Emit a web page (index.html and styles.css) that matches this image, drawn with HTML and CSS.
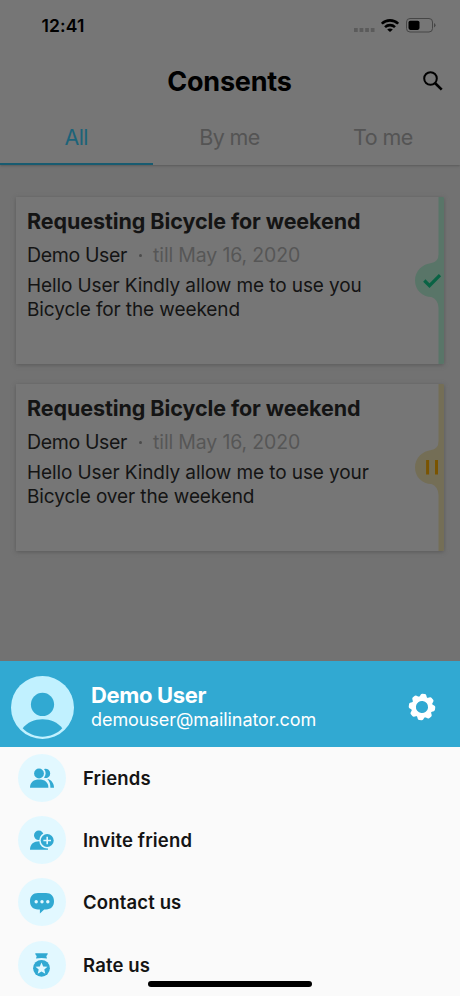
FILE: index.html
```
<!DOCTYPE html>
<html lang="en">
<head>
<meta charset="utf-8">
<title>Consents</title>
<link rel="stylesheet" href="styles.css">
</head>
<body>
<main class="phone">
  <header class="top">
    <div class="status">
      <span class="time">12:41</span>
      <span class="signals">
        <svg width="21" height="5" viewBox="0 0 21 5" fill="#5b5b5b"><path d="M0 0h3.700v4H0zM5.600 0h3.700v4H5.600zM11.200 0h3.700v4h-3.700zM16.800 0h3.700v4h-3.700z"/></svg>
        <svg class="wifi" width="18" height="13" viewBox="0 0 18 13" fill="none" stroke="#000" stroke-width="2.600"><path d="M.8 4.700C5.300.2 12.700.2 17.200 4.700"/><path d="M4 8.100c2.800-2.600 7.200-2.600 10 0"/><path d="M6.200 10.500c1.600-1.500 4-1.500 5.600 0L9 13z" fill="#000" stroke="none"/></svg>
        <svg class="battery" width="30" height="15" viewBox="0 0 30 15"><rect x=".5" y=".5" width="26" height="13.500" rx="3.500" fill="none" stroke="#464646"/><rect x="2.500" y="2.700" width="11" height="9.200" rx="1.800"/><path d="M28 5q3 2.200 0 4.500z" fill="#464646"/></svg>
      </span>
    </div>
    <div class="titlebar">
      <h1>Consents</h1>
      <svg class="search" width="20" height="20" viewBox="0 0 20 20" fill="none" stroke="#000" stroke-width="2"><circle cx="7.500" cy="7.500" r="6.300"/><path d="M12 12l6.700 6.700" stroke-width="2.600"/></svg>
    </div>
    <nav class="tabs">
      <span class="tab active">All</span><span class="tab">By me</span><span class="tab">To me</span>
    </nav>
  </header>
  <section class="list">
    <article class="card">
      <h2>Requesting Bicycle for weekend</h2>
      <p class="meta"><span>Demo User</span><i class="dot"></i><span class="till">till May 16, 2020</span></p>
      <p class="message">Hello User Kindly allow me to use you<br>Bicycle for the weekend</p>
      <svg class="edge" width="30" height="167" viewBox="0 0 30 167"><path d="M24.500 0h4.500q1 0 1 1v165q0 1-1 1h-4.500v-56q0-8-7-11C8.500 100 1 93 1 83.500S8.500 67 17.500 66q7-1 7-9z" fill="#597568"/><path d="M10.300 83.500l5.200 5.200L26 78.200" fill="none" stroke="#096344" stroke-width="3.200"/></svg>
    </article>
    <article class="card">
      <h2>Requesting Bicycle for weekend</h2>
      <p class="meta"><span>Demo User</span><i class="dot"></i><span class="till">till May 16, 2020</span></p>
      <p class="message">Hello User Kindly allow me to use your<br>Bicycle over the weekend</p>
      <svg class="edge" width="30" height="167" viewBox="0 0 30 167"><path d="M24.500 0h4.500q1 0 1 1v165q0 1-1 1h-4.500v-56q0-8-7-11C8.500 100 1 93 1 83.500S8.500 67 17.500 66q7-1 7-9z" fill="#746e56"/><path d="M13.600 76v14.500M22.500 76v14.500" fill="none" stroke="#7a5400" stroke-width="3"/></svg>
    </article>
  </section>
  <section class="sheet">
    <div class="profile">
      <svg class="avatar" width="63" height="63" viewBox="0 0 62 62"><circle cx="31" cy="31" r="31" fill="#c1f1ff"/><circle cx="31" cy="28" r="11.400" fill="#31a9d2"/><path d="M11.500 51.500C20 39.500 42 39.500 50.500 51.500 40 62.500 22 62.500 11.500 51.500z" fill="#31a9d2"/></svg>
      <div class="who"><strong>Demo User</strong><span>demouser@mailinator.com</span></div>
      <svg class="gear" width="28" height="28" viewBox="-14 -14 28 28"><g transform="rotate(7)"><circle r="8.400" fill="none" stroke="#fff" stroke-width="4.600"/><g fill="#fff"><path id="tooth" d="M-3.900-9.500L-2.700-12.300Q-2.200-13.200-1.200-13.200H1.200Q2.200-13.200 2.700-12.300L3.900-9.500z"/><use href="#tooth" transform="rotate(45)"/><use href="#tooth" transform="rotate(90)"/><use href="#tooth" transform="rotate(135)"/><use href="#tooth" transform="rotate(180)"/><use href="#tooth" transform="rotate(225)"/><use href="#tooth" transform="rotate(270)"/><use href="#tooth" transform="rotate(315)"/></g></g></svg>
    </div>
    <ul class="menu">
      <li><span class="bubble"><svg width="24" height="24" viewBox="0 0 24 24"><g fill="#31a9d2"><path d="M14 3.100a4.600 4.600 0 1 1 0 8.600c2.200-2.400 2.200-6.200 0-8.600z"/><path d="M17.300 13c4 .6 6.700 4.200 6.700 8.700h-3.600c0-3.800-.8-6.400-3.100-8.700z"/></g><circle cx="9" cy="7.500" r="4.900" fill="#31a9d2"/><path d="M0 21.700c0-5.600 3.800-8.200 9.200-8.200s9.200 2.600 9.200 8.200z" fill="#31a9d2"/></svg></span><span class="label">Friends</span></li>
      <li><span class="bubble"><svg width="24" height="24" viewBox="0 0 24 24"><circle cx="8.800" cy="7.300" r="4.800" fill="#31a9d2"/><path d="M0 21.800c0-5.800 3.800-8.500 9.400-8.500 5 0 8.600 2.700 8.600 8.500z" fill="#31a9d2"/><circle cx="17.200" cy="12.500" r="8" fill="#e2f8ff"/><circle cx="17.200" cy="12.500" r="6.500" fill="#31a9d2"/><path d="M17.200 8.700v7.600M13.400 12.500h7.600" stroke="#e2f8ff" stroke-width="1.600"/></svg></span><span class="label">Invite friend</span></li>
      <li><span class="bubble"><svg width="24" height="24" viewBox="0 0 24 24"><path d="M8 3h8c5 0 8 3.200 8 8.200s-3 8.200-8 8.200h-1.800L9.900 23.500v-4.100H8c-5 0-8-3.200-8-8.200S3 3 8 3z" fill="#31a9d2"/><g fill="#e2f8ff"><circle cx="6.200" cy="11.800" r="1.700"/><circle cx="12" cy="11.800" r="1.700"/><circle cx="17.800" cy="11.800" r="1.700"/></g></svg></span><span class="label">Contact us</span></li>
      <li><span class="bubble"><svg width="24" height="24" viewBox="0 0 24 24"><path d="M5.200.2h12.600q-.2 2-1.500 2.900l.7 2.500q-5.500-1.400-11 0l.7-2.500Q5.400 2.200 5.200.2z" fill="#31a9d2"/><circle cx="11.500" cy="15.300" r="8.400" fill="#31a9d2"/><path d="M11.500 9.500l1.700 3.900 4.300.4-3.200 2.800 1 4.200-3.800-2.200-3.800 2.200 1-4.200-3.200-2.800 4.300-.4z" fill="#e2f8ff"/></svg></span><span class="label">Rate us</span></li>
    </ul>
    <div class="home"></div>
  </section>
</main>
</body>
</html>
```

FILE: styles.css
```
* { box-sizing: border-box; margin: 0; padding: 0; }
body { font-family: Inter, "Liberation Sans", sans-serif; background: #727272; }
svg { display: block; }
.phone { width: 460px; height: 996px; overflow: hidden; display: flex; flex-direction: column; background: #727272; color: #141414; }
.top { height: 165px; background: #767676; box-shadow: 0 1px 2px #5a5a5a; }
.status { height: 50px; padding: 1px 24px 0 41.500px; display: flex; align-items: center; justify-content: space-between; }
.time { font-size: 17.500px; font-weight: 600; color: #000; letter-spacing: .15px; }
.signals { display: flex; align-items: center; }
.signals > svg:first-child { margin-top: 9px; }
.wifi { margin-left: 6px; }
.battery { margin-left: 7px; }
.titlebar { height: 61px; display: grid; grid-template-columns: 1fr auto 1fr; align-items: center; padding-right: 17.500px; padding-left: 16.500px; }
h1 { grid-column: 2; font-size: 27px; font-weight: 700; color: #000; letter-spacing: -.2px; padding-top: 1px; }
.search { justify-self: end; }
.tabs { height: 53.500px; display: flex; }
.tab { flex: 1; text-align: center; font-size: 21.500px; letter-spacing: -.6px; text-indent: -1px; line-height: 52px; color: #545454; border-bottom: 2px solid transparent; }
.active { color: #1c6379; border-color: #185b70; }
.list { padding: 32px 16px 0; display: flex; flex-direction: column; gap: 20px; height: 496px; }
.card { position: relative; height: 167px; flex: none; padding: 10px 0 0 11px; background: #767676; box-shadow: 0 1px 4px #5a5a5a; white-space: nowrap; }
h2 { font-size: 21.500px; line-height: 29px; font-weight: 700; letter-spacing: -.08px; }
.meta { display: flex; align-items: center; font-size: 19.500px; line-height: 28px; margin-top: 5px; letter-spacing: -.35px; }
.dot { width: 3px; height: 3px; border-radius: 50%; background: #4c4c4c; margin: 0 11px 0 12px; }
.till { color: #565656; letter-spacing: -.15px; }
.message { font-size: 19px; line-height: 24px; margin-top: 5px; letter-spacing: -.1px; }
.edge { position: absolute; right: 0; top: 0; }
.sheet { flex: 1; background: #fafafa; position: relative; }
.profile { height: 86px; background: #31a9d2; display: flex; align-items: center; padding: 6px 24px 0 11px; color: #fff; }
.who { flex: 1; margin-left: 17px; margin-top: -2px; display: flex; flex-direction: column; }
.who strong { font-size: 22px; line-height: 27px; font-weight: 700; letter-spacing: -.35px; }
.who span { font-size: 18px; line-height: 22px; letter-spacing: -.07px; }
.menu { list-style: none; }
.menu li { height: 62.200px; padding-left: 18px; display: flex; align-items: center; }
.bubble { width: 48px; height: 48px; border-radius: 50%; background: #e2f8ff; display: grid; place-items: center; }
.label { margin-left: 17px; font-size: 18.500px; font-weight: 600; letter-spacing: .15px; }
.home { position: absolute; left: 148px; top: 320px; width: 164px; height: 6px; border-radius: 3px; background: #000; }
```
